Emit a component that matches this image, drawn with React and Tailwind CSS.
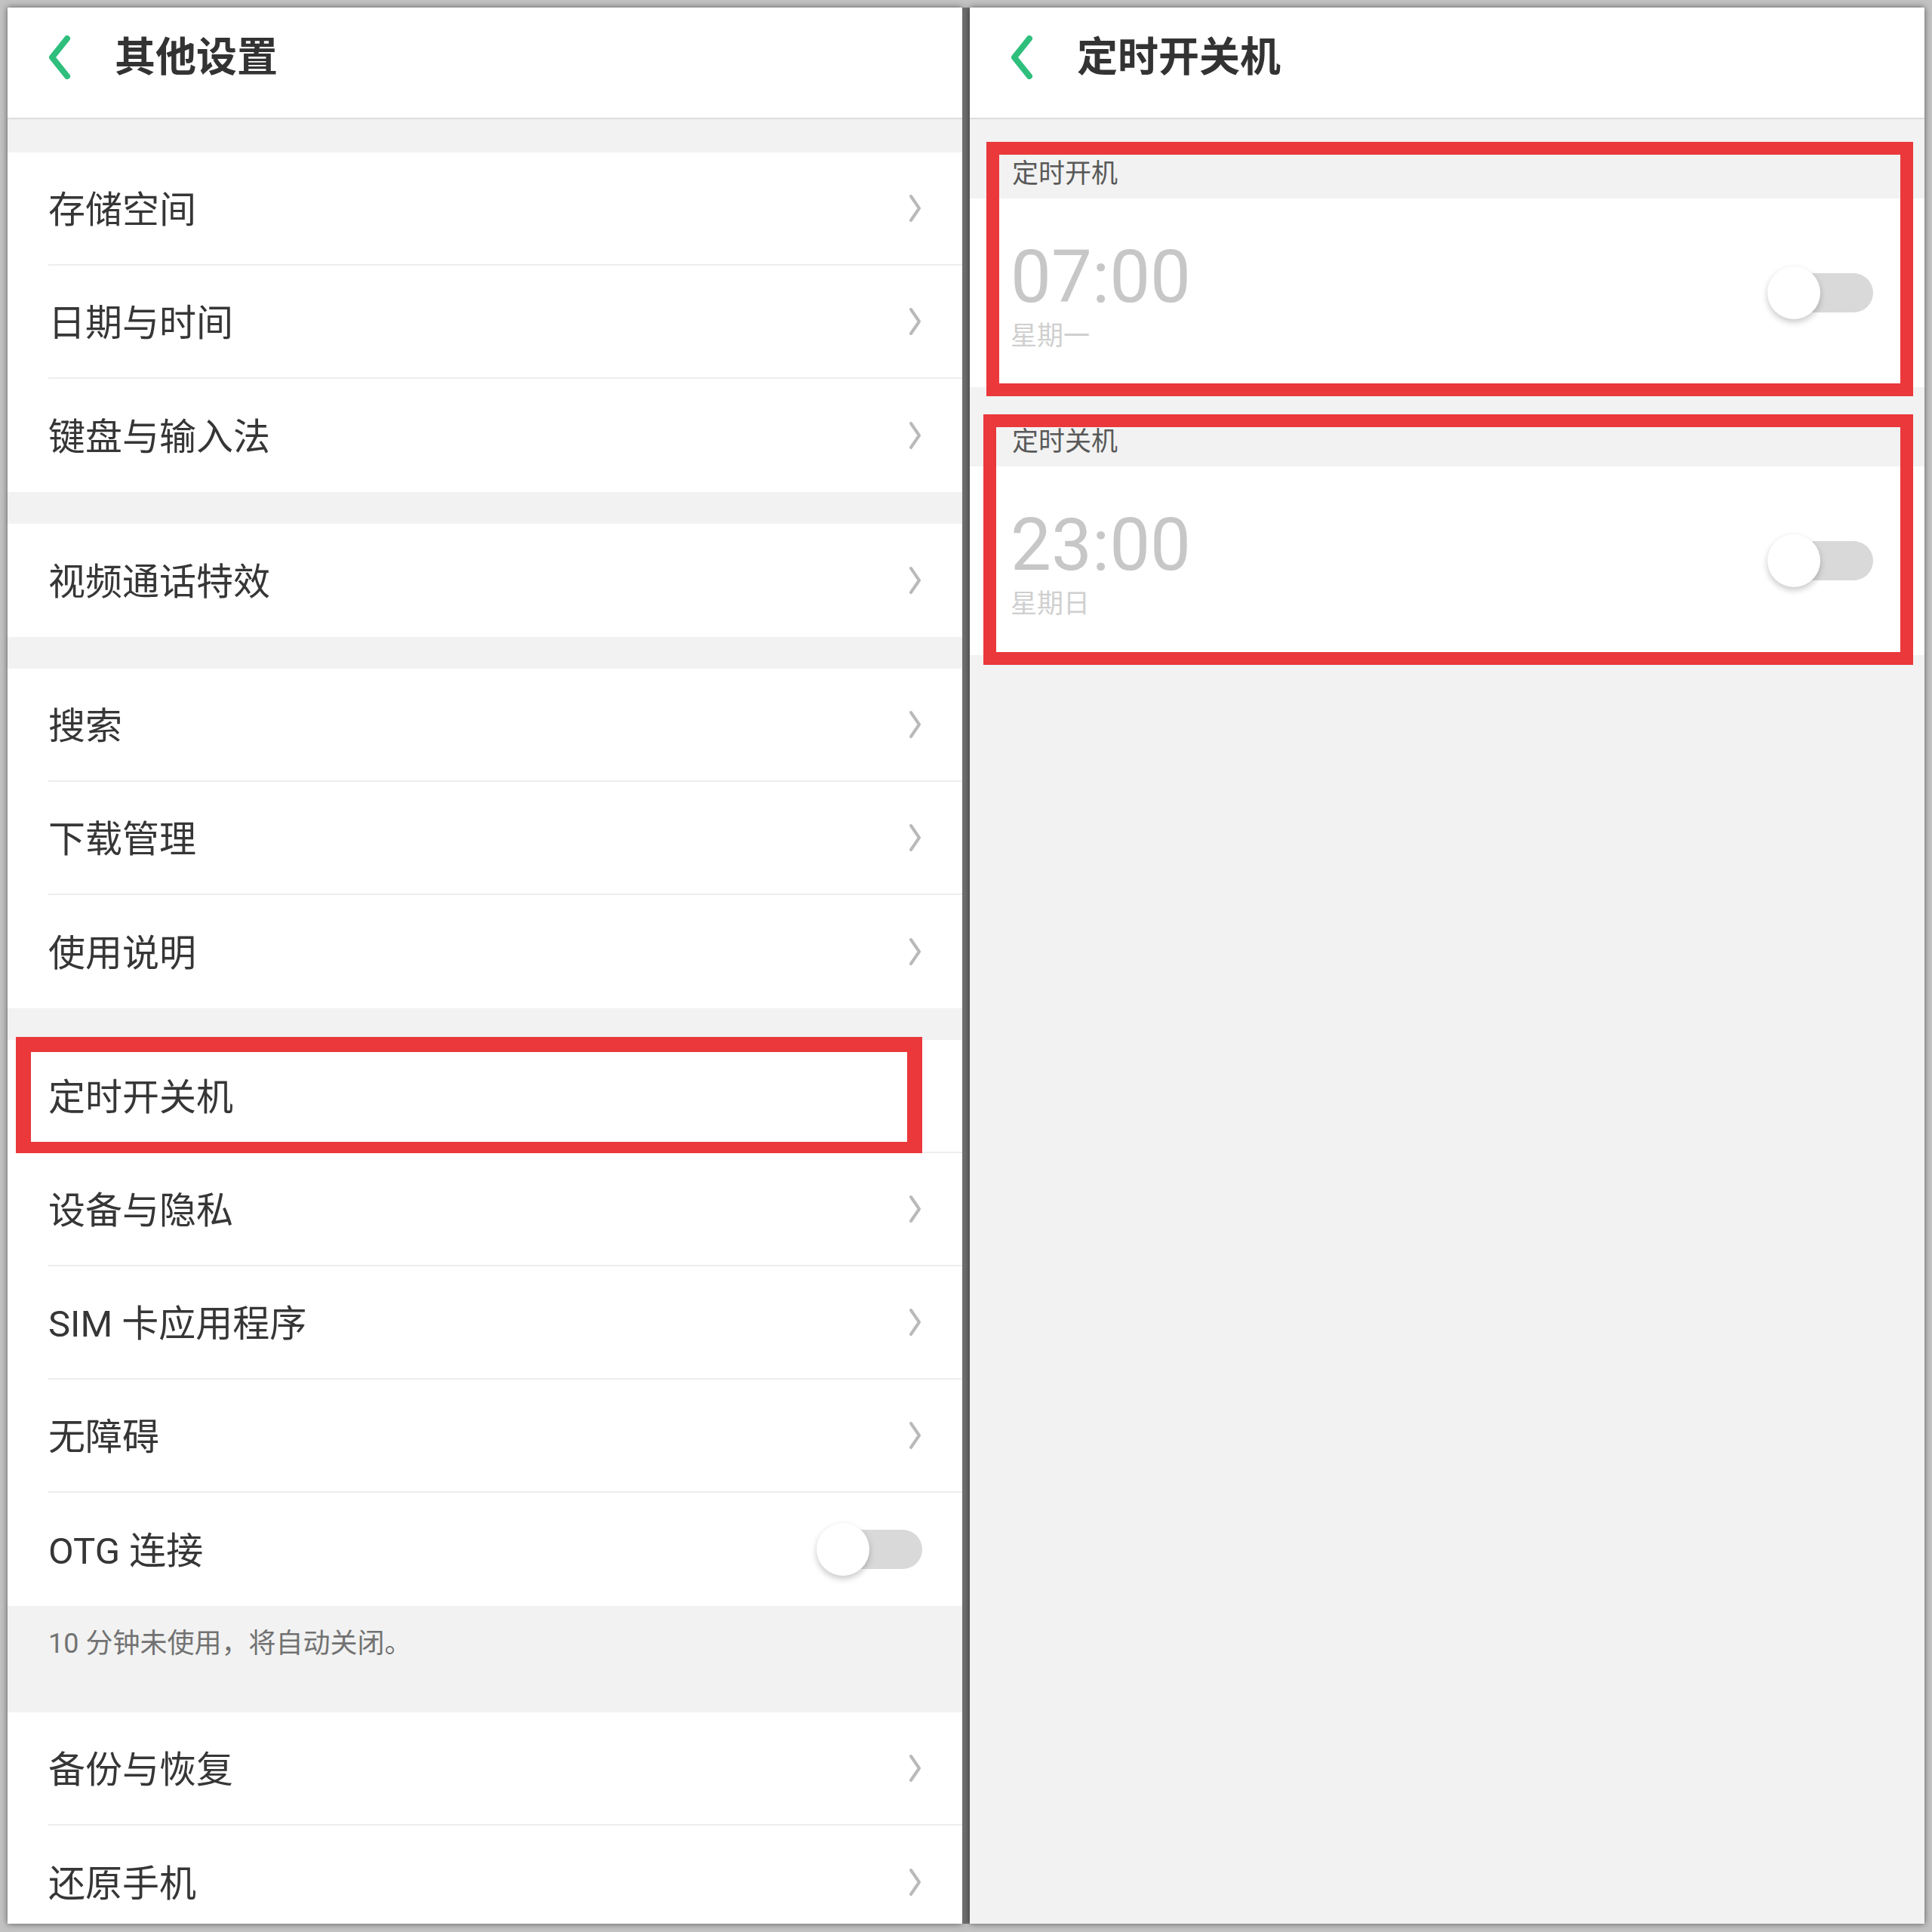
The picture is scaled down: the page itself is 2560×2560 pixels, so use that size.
import React from 'react';

const FONT = "font-['Roboto','Noto_Sans_CJK_SC',sans-serif]";

function BackArrow() {
  return (
    <svg width="30" height="58" viewBox="0 0 30 58" className="shrink-0">
      <path d="M25 4 L5 29 L25 54" fill="none" stroke="#2fbf7d" strokeWidth="8" strokeLinecap="round" strokeLinejoin="round" />
    </svg>
  );
}

function Chevron() {
  return (
    <svg width="18" height="38" viewBox="0 0 18 38" className="shrink-0">
      <path d="M3 3 L14 19 L3 35" fill="none" stroke="#b9b9b9" strokeWidth="4" strokeLinecap="round" strokeLinejoin="round" />
    </svg>
  );
}

function Toggle() {
  return (
    <div className="relative w-[140px] h-[70px] shrink-0">
      <div className="absolute right-0 top-[9px] h-[52px] w-[128px] rounded-full bg-[#d9d9d9]" />
      <div className="absolute left-0 top-0 h-[70px] w-[70px] rounded-full bg-white shadow-[0_4px_8px_rgba(0,0,0,0.22)]" />
    </div>
  );
}

function Header({ title }) {
  return (
    <header className="h-[148px] shrink-0 flex items-center pb-[14px] pl-[54px] bg-white border-b-2 border-[#dcdcdc]">
      <BackArrow />
      <span className="ml-[58px] mt-[2px] text-[54px] leading-none font-bold text-[#333]">{title}</span>
    </header>
  );
}

function Gap({ h = 'h-[42px]' }) {
  return <div className={`${h} shrink-0 bg-[#f2f2f2]`} />;
}

function Row({ label, last, toggle, boxed }) {
  return (
    <div className="relative h-[150px] shrink-0 bg-white pl-[54px]">
      <div className={`h-full flex items-center pr-[53px] ${last ? '' : 'border-b-2 border-[#ededed]'}`}>
        <span className="flex-1 pt-[5px] text-[49px] leading-none text-[#363636]">{label}</span>
        {toggle ? <Toggle /> : <Chevron />}
      </div>
      {boxed && (
        <div className="absolute left-[11px] right-[53px] top-[-4px] bottom-[-5px] border-[20px] border-[#ea383b]" />
      )}
    </div>
  );
}

function OtherSettings() {
  return (
    <div className="w-[1265px] h-[2539px] bg-[#f2f2f2] flex flex-col overflow-hidden shadow-[0_0_8px_rgba(0,0,0,0.55)]">
      <Header title="其他设置" />
      <Gap h="h-[44px]" />
      <Row label="存储空间" />
      <Row label="日期与时间" />
      <Row label="键盘与输入法" last />
      <Gap />
      <Row label="视频通话特效" last />
      <Gap />
      <Row label="搜索" />
      <Row label="下载管理" />
      <Row label="使用说明" last />
      <Gap />
      <Row label="定时开关机" boxed />
      <Row label="设备与隐私" />
      <Row label="SIM 卡应用程序" />
      <Row label="无障碍" />
      <Row label="OTG 连接" toggle last />
      <div className="h-[141px] shrink-0 bg-[#f2f2f2] pl-[54px] pt-[27px]">
        <span className="text-[36px] leading-[46px] text-[#727272]">10 分钟未使用，将自动关闭。</span>
      </div>
      <Row label="备份与恢复" />
      <Row label="还原手机" last />
    </div>
  );
}

function TimerSection({ label, time, day, box }) {
  return (
    <div className="relative shrink-0">
      <div className="h-[105px] pl-[56px] pt-[50px]">
        <span className="text-[35px] leading-[46px] text-[#595959]">{label}</span>
      </div>
      <div className="h-[250px] bg-white flex items-center pl-[54px] pr-[68px]">
        <div className="flex-1 flex flex-col self-start pt-[56px]">
          <span className="text-[96px] leading-[96px] text-[#c7c7c7]">{time}</span>
          <span className="mt-[13px] text-[35px] leading-[35px] text-[#cfcfcf]">{day}</span>
        </div>
        <Toggle />
      </div>
      <div className={`absolute right-[15px] border-[17px] border-[#ea383b] ${box}`} />
    </div>
  );
}

function TimerPower() {
  return (
    <div className="w-[1265px] h-[2539px] bg-[#f2f2f2] flex flex-col overflow-hidden shadow-[0_0_8px_rgba(0,0,0,0.55)]">
      <Header title="定时开关机" />
      <TimerSection label="定时开机" time="07:00" day="星期一" box="left-[22px] top-[30px] bottom-[-12px]" />
      <TimerSection label="定时关机" time="23:00" day="星期日" box="left-[18px] top-[36px] bottom-[-13px]" />
    </div>
  );
}

export default function App() {
  return (
    <div className={`w-[2560px] h-[2560px] bg-[#c2c2c2] p-[10px] flex ${FONT}`}>
      <OtherSettings />
      <div className="w-[10px] h-[2539px] bg-[#6e6e6e]" />
      <TimerPower />
    </div>
  );
}
